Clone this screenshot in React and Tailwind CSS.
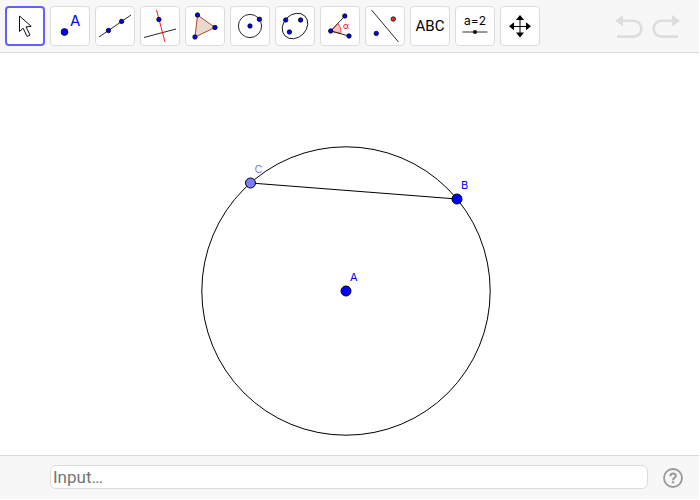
import React from "react";

const INK = "#111111";
const BLUE = "#0000ff";

function Dot({ x, y, r = 2.2, fill = BLUE }) {
  return <circle cx={x} cy={y} r={r} fill={fill} stroke="#000000" strokeWidth="0.8" />;
}

const tools = [
  {
    name: "Move",
    icon: (
      <path d="M14.5 10v15.5l3.6-3.3 4.1 8.3 2.8-1.5-4-8.1 5.2-.6z" fill="#ffffff" stroke={INK} strokeWidth="1" />
    ),
  },
  {
    name: "Point",
    icon: (
      <>
        <Dot x={14.5} y={26} r={3.4} />
        <text x="20" y="20" fontSize="15" fill={BLUE} className="font-['Inter',sans-serif]">A</text>
      </>
    ),
  },
  {
    name: "Line",
    icon: (
      <>
        <path d="M4 31L36 9" stroke={INK} strokeWidth="0.9" />
        <Dot x={13.5} y={24.5} />
        <Dot x={26.6} y={15.4} />
      </>
    ),
  },
  {
    name: "Perpendicular line",
    icon: (
      <>
        <path d="M4 31.5L36 23" stroke={INK} strokeWidth="0.9" />
        <path d="M16.5 4L25 36" stroke="#ff0000" strokeWidth="0.9" />
        <Dot x={18.9} y={13.5} />
      </>
    ),
  },
  {
    name: "Polygon",
    icon: (
      <>
        <path d="M12.5 9L30 21.5L10 31z" fill="#ead7cd" stroke="#b0492b" strokeWidth="1" />
        <Dot x={12.5} y={9} />
        <Dot x={30} y={21.5} />
        <Dot x={10} y={31} />
      </>
    ),
  },
  {
    name: "Circle with centre",
    icon: (
      <>
        <circle cx="20" cy="20" r="11.6" fill="none" stroke={INK} strokeWidth="0.9" />
        <Dot x={20} y={20} />
        <Dot x={29.4} y={13.3} />
      </>
    ),
  },
  {
    name: "Ellipse",
    icon: (
      <>
        <ellipse cx="20" cy="20" rx="14" ry="11.4" transform="rotate(-45 20 20)" fill="none" stroke={INK} strokeWidth="0.9" />
        <Dot x={10.7} y={14} />
        <Dot x={25.6} y={14} />
        <Dot x={14.4} y={26} />
      </>
    ),
  },
  {
    name: "Angle",
    icon: (
      <>
        <path d="M10.7 25L18 17.6A10.4 10.4 0 0 1 20.8 27.5z" fill="#ffc2c2" stroke="#ee3333" strokeWidth="0.8" />
        <path d="M24.8 10L10.7 25L29 30" fill="none" stroke={INK} strokeWidth="0.9" />
        <Dot x={24.8} y={10} />
        <Dot x={10.7} y={25} />
        <Dot x={29} y={30} />
        <text x="23" y="23" fontSize="9" fill="#ff0000" className="font-['Inter',sans-serif]">α</text>
      </>
    ),
  },
  {
    name: "Reflect about line",
    icon: (
      <>
        <path d="M6.5 4L33.5 36" stroke={INK} strokeWidth="0.9" />
        <Dot x={28.3} y={13} fill="#f03020" />
        <Dot x={11.3} y={27.4} />
      </>
    ),
  },
  {
    name: "Text",
    icon: (
      <text x="20" y="25" fontSize="15" textAnchor="middle" fill="#000000" className="font-['Roboto',sans-serif]">ABC</text>
    ),
  },
  {
    name: "Slider",
    icon: (
      <>
        <text x="20" y="19" fontSize="12" textAnchor="middle" fill="#000000" className="font-['Inter',sans-serif]">a=2</text>
        <path d="M7.5 26H32.5" stroke="#555555" strokeWidth="1.2" />
        <circle cx="20" cy="26" r="2.1" fill="#111111" />
      </>
    ),
  },
  {
    name: "Move graphics view",
    icon: (
      <>
        <path d="M20 13V28M12 20.5H28" stroke="#000000" strokeWidth="1" />
        <path d="M20 9l4 5h-8zM20 31.5l4-5h-8zM9 20.3l5-4v8zM31 20.3l-5-4v8z" fill="#000000" />
      </>
    ),
  },
];

function ToolButton({ name, icon, selected }) {
  return (
    <button
      type="button"
      aria-label={name}
      className={
        selected
          ? "w-10 h-10 shrink-0 rounded bg-white border-2 border-[#6161ff]"
          : "w-10 h-10 shrink-0 rounded bg-white border border-[#dcdcdc]"
      }
    >
      <svg viewBox="0 0 40 40" className={selected ? "w-10 h-10 -m-0.5" : "w-10 h-10 -m-px"}>
        {icon}
      </svg>
    </button>
  );
}

function HistoryButton({ label, children }) {
  return (
    <button type="button" aria-label={label} disabled>
      <svg viewBox="0 0 28 24" className="w-7 h-6" fill="none" stroke="#dddddd" strokeWidth="2.6">
        {children}
      </svg>
    </button>
  );
}

function Toolbar() {
  return (
    <header className="flex items-center justify-between bg-[#f7f7f7] border-b border-[#dcdcdc] pl-[5px] pr-[19px] py-1.5">
      <div className="flex gap-[5px]">
        {tools.map((tool, i) => (
          <ToolButton key={tool.name} name={tool.name} icon={tool.icon} selected={i === 0} />
        ))}
      </div>
      <div className="flex gap-[9px]">
        <HistoryButton label="Undo">
          <path d="M6 6.8H18.5A7.9 7.9 0 0 1 18.5 22.6H2" />
          <path d="M0 6.8L8 1v11.6z" fill="#dddddd" stroke="none" />
        </HistoryButton>
        <HistoryButton label="Redo">
          <path d="M22 6.8H9.5A7.9 7.9 0 0 0 9.5 22.6H26" />
          <path d="M28 6.8L20 1v11.6z" fill="#dddddd" stroke="none" />
        </HistoryButton>
      </div>
    </header>
  );
}

const points = [
  { label: "A", x: 346, y: 238, fill: BLUE, color: BLUE },
  { label: "B", x: 457, y: 146, fill: BLUE, color: BLUE },
  { label: "C", x: 250.5, y: 130, fill: "#7d7dff", color: "#7d7dff" },
];

function GraphicsView() {
  return (
    <main className="flex grow bg-white">
      <svg className="w-full min-h-96" role="img" aria-label="Circle with chord BC">
        <circle cx="346" cy="238" r="144.2" fill="none" stroke="#000000" strokeWidth="1" />
        <path d="M250.5 130L457 146" stroke="#000000" strokeWidth="1" />
        {points.map((p) => (
          <g key={p.label}>
            <circle cx={p.x} cy={p.y} r="5" fill={p.fill} stroke="#000000" strokeWidth="1" />
            <text x={p.x + 4} y={p.y - 10} fontSize="11" fill={p.color} className="font-['Inter',sans-serif]">
              {p.label}
            </text>
          </g>
        ))}
      </svg>
    </main>
  );
}

function InputBar() {
  return (
    <footer className="flex items-center bg-[#f7f7f7] border-t border-[#dcdcdc] h-11 pl-[50px] pr-4">
      <input
        type="text"
        aria-label="Input"
        placeholder="Input…"
        className="grow min-w-0 h-6 -mt-px rounded-md bg-white border border-[#dcdcdc] px-0.5 text-[17px] leading-5 text-black placeholder:text-[#757575] font-['Roboto',sans-serif]"
      />
      <button type="button" aria-label="Help" className="ml-[15px]">
        <svg viewBox="0 0 20 20" className="w-5 h-5" fill="none" stroke="#999999">
          <circle cx="10" cy="10" r="9" strokeWidth="1.8" />
          <path d="M7.3 8.2C7.3 4.5 12.8 4.7 12.8 7.8C12.8 9.8 10 9.8 10 12.2" strokeWidth="2" />
          <path d="M10 13.3v2" strokeWidth="2.2" />
        </svg>
      </button>
    </footer>
  );
}

export default function App() {
  return (
    <div className="flex flex-col min-h-screen bg-white pr-px pb-px">
      <Toolbar />
      <GraphicsView />
      <InputBar />
    </div>
  );
}
